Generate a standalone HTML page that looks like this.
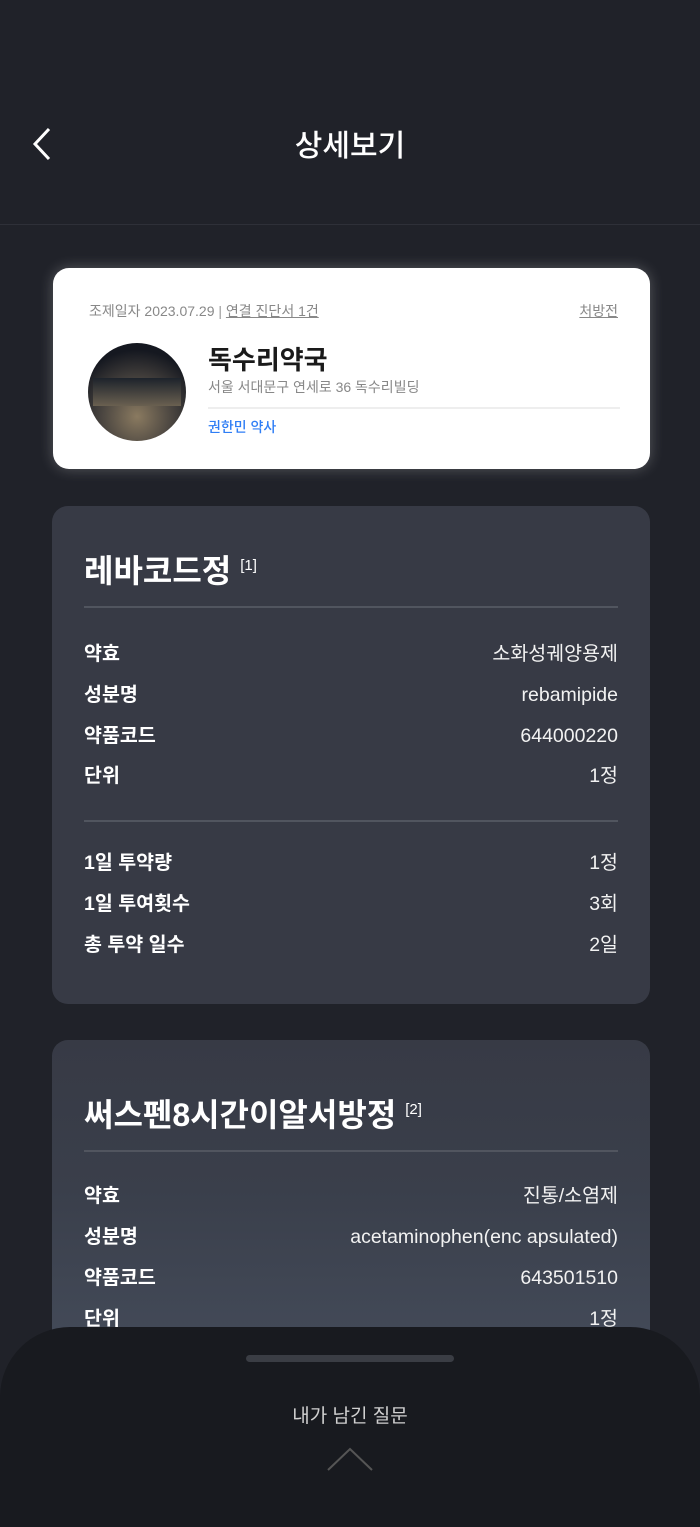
<!DOCTYPE html>
<html><head><meta charset="utf-8"><style>
*{margin:0;padding:0;box-sizing:border-box}
body{width:700px;height:1518px;background:#202229;font-family:"Liberation Sans","Noto Sans CJK KR",sans-serif;position:relative;overflow:hidden;color:#fff}
.abs{position:absolute}
.hdr{top:121px;left:0;width:700px;text-align:center;font-size:30px;font-weight:500;color:#fff}
.hline{top:224px;left:0;width:700px;height:1px;background:#2e3038}
.wc{left:53px;top:268px;width:597px;height:201px;background:#fff;border-radius:16px;box-shadow:0 0 14px rgba(255,255,255,.25);color:#222}
.card{left:52px;width:598px;background:#373a45;border-radius:16px}
.ttl{position:absolute;left:32px;font-size:32px;font-weight:700;color:#fff;line-height:40px}
.ttl sup{font-size:15px;font-weight:500;vertical-align:12px;margin-left:9px}
.dv{position:absolute;left:32px;width:534px;height:2px;background:#51555f}
.row{position:absolute;left:32px;width:534px;display:flex;justify-content:space-between;font-size:19.5px;line-height:24px}
.row b{font-weight:700}
.row span{color:#f2f2f2}
</style></head><body>
<svg class="abs" style="left:30px;top:126px" width="24" height="36" viewBox="0 0 24 36"><path d="M19 3 L5 18 L19 33" stroke="#fff" stroke-width="3" fill="none"/></svg>
<div class="abs hdr">상세보기</div>
<div class="abs hline"></div>

<div class="abs wc">
 <div class="abs" style="left:36px;top:33px;font-size:14px;color:#888">조제일자 2023.07.29 <span style="color:#999">|</span> <u>연결 진단서 1건</u></div>
 <div class="abs" style="right:32px;top:33px;font-size:14px;color:#888"><u>처방전</u></div>
 <div class="abs" style="left:35px;top:75px;width:98px;height:98px;border-radius:50%;background:radial-gradient(circle at 50% 75%,#8a7a60 0,#4a4540 40%,#151820 75%)"></div>
 <div class="abs" style="left:40px;top:110px;width:88px;height:28px;background:linear-gradient(#1d232b,#6a6050)"></div>
 <div class="abs" style="left:155px;top:72px;font-size:26px;font-weight:700;color:#1a1a1a">독수리약국</div>
 <div class="abs" style="left:155px;top:109px;font-size:14px;color:#888">서울 서대문구 연세로 36 독수리빌딩</div>
 <div class="abs" style="left:155px;top:139px;width:412px;height:2px;background:#eee"></div>
 <div class="abs" style="left:155px;top:149px;font-size:14px;color:#2f7ef5;font-weight:500">권한민 약사</div>
</div>

<div class="abs card" style="top:506px;height:498px">
 <div class="ttl" style="top:40px">레바코드정<sup>[1]</sup></div>
 <div class="dv" style="top:100px"></div>
 <div class="row" style="top:136px"><b>약효</b><span>소화성궤양용제</span></div>
 <div class="row" style="top:177px"><b>성분명</b><span>rebamipide</span></div>
 <div class="row" style="top:218px"><b>약품코드</b><span>644000220</span></div>
 <div class="row" style="top:258px"><b>단위</b><span>1정</span></div>
 <div class="dv" style="top:314px"></div>
 <div class="row" style="top:345px"><b>1일 투약량</b><span>1정</span></div>
 <div class="row" style="top:386px"><b>1일 투여횟수</b><span>3회</span></div>
 <div class="row" style="top:427px"><b>총 투약 일수</b><span>2일</span></div>
</div>

<div class="abs card" style="top:1040px;height:400px;background:linear-gradient(#373a45 0,#3a3f4b 150px,#434a58 300px)">
 <div class="ttl" style="top:50px">써스펜8시간이알서방정<sup>[2]</sup></div>
 <div class="dv" style="top:110px"></div>
 <div class="row" style="top:144px"><b>약효</b><span>진통/소염제</span></div>
 <div class="row" style="top:185px"><b>성분명</b><span>acetaminophen(enc apsulated)</span></div>
 <div class="row" style="top:226px"><b>약품코드</b><span>643501510</span></div>
 <div class="row" style="top:267px"><b>단위</b><span>1정</span></div>
</div>

<div class="abs" style="left:0;top:1327px;width:700px;height:200px;background:#181a1f;border-radius:70px 70px 0 0">
 <div class="abs" style="left:246px;top:28px;width:208px;height:7px;border-radius:4px;background:#3a3d44"></div>
 <div class="abs" style="left:0;width:700px;top:74px;text-align:center;font-size:19px;color:#d0d0d0">내가 남긴 질문</div>
 <svg class="abs" style="left:326px;top:119px" width="48" height="26" viewBox="0 0 48 26"><path d="M2 24 L24 3 L46 24" stroke="#555" stroke-width="2" fill="none"/></svg>
</div>
</body></html>
